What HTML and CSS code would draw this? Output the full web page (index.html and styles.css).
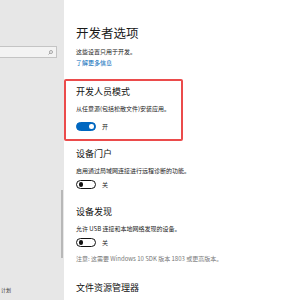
FILE: index.html
```html
<!DOCTYPE html>
<html lang="zh-CN">
<head>
  <meta charset="UTF-8">
  <title>开发者选项</title>
  <link rel="stylesheet" href="styles.css">
</head>
<body>
  <div class="window">
    <aside class="sidebar">
      <div class="search">
        <svg class="search-icon" width="5" height="5" viewBox="0 0 10 10">
          <circle cx="6" cy="4" r="3" fill="none" stroke="#777" stroke-width="1.2"/>
          <line x1="4" y1="6" x2="1" y2="9" stroke="#777" stroke-width="1.2"/>
        </svg>
      </div>
      <div class="nav-item">计划</div>
      <div class="scroll-thumb"></div>
    </aside>

    <main class="content">
      <h1 class="page-title">开发者选项</h1>
      <p class="desc intro">这些设置只用于开发。</p>
      <a class="more" href="#">了解更多信息</a>

      <section class="group highlight">
        <h2 class="group-title">开发人员模式</h2>
        <p class="desc">从任意源(包括松散文件)安装应用。</p>
        <div class="toggle-row">
          <span class="toggle on"><span class="knob"></span></span>
          <span class="toggle-label">开</span>
        </div>
      </section>

      <section class="group portal">
        <h2 class="group-title">设备门户</h2>
        <p class="desc">启用通过局域网连接进行远程诊断的功能。</p>
        <div class="toggle-row">
          <span class="toggle"><span class="knob"></span></span>
          <span class="toggle-label">关</span>
        </div>
      </section>

      <section class="group discovery">
        <h2 class="group-title">设备发现</h2>
        <p class="desc">允许 USB 连接和本地网络发现的设备。</p>
        <div class="toggle-row">
          <span class="toggle"><span class="knob"></span></span>
          <span class="toggle-label">关</span>
        </div>
        <p class="desc note">注意: 这需要 Windows 10 SDK 版本 1803 或更高版本。</p>
      </section>

      <section class="group explorer">
        <h2 class="group-title">文件资源管理器</h2>
      </section>
    </main>
  </div>
</body>
</html>
```

FILE: styles.css
```css
* {
  margin: 0;
  padding: 0;
  box-sizing: border-box;
}

body {
  font-family: "Noto Sans CJK SC", "Noto Sans", sans-serif;
  background: #fff;
  color: #1a1a1a;
  width: 300px;
  height: 300px;
  overflow: hidden;
}

.window {
  display: flex;
  height: 300px;
}

/* 左侧导航 */
.sidebar {
  position: relative;
  width: 64px;
  flex-shrink: 0;
  background: #e7e7e7;
  overflow: hidden;
  display: flex;
  flex-direction: column;
}

.search {
  margin-top: 46px;
  width: 57px;
  height: 12px;
  background: #f3f3f3;
  border: 1px solid #c4c4c4;
  border-left: none;
  display: flex;
  align-items: center;
  justify-content: flex-end;
  padding-right: 3px;
}

.search-icon {
  display: block;
}

.nav-item {
  margin-top: auto;
  margin-bottom: 6px;
  padding-left: 1px;
  font-size: 5px;
  line-height: 8px;
  color: #333;
  white-space: nowrap;
}

.scroll-thumb {
  position: absolute;
  right: 1px;
  top: 190px;
  width: 2px;
  height: 68px;
  background: #b8b8b8;
}

/* 右侧内容 */
.content {
  flex: 1;
  padding-top: 24px;
}

.page-title {
  font-size: 12.5px;
  line-height: 17px;
  font-weight: 400;
  padding-left: 12px;
}

.desc {
  font-size: 6px;
  line-height: 8px;
  color: #222;
  white-space: nowrap;
}

.intro {
  margin-top: 7px;
  padding-left: 12px;
}

.more {
  display: block;
  margin-top: 3px;
  padding-left: 12px;
  font-size: 6px;
  line-height: 8px;
  color: #0067b8;
  text-decoration: none;
}

.group {
  padding-left: 12px;
}

.group-title {
  font-size: 9px;
  line-height: 12px;
  font-weight: 400;
  color: #111;
}

.group .desc {
  margin-top: 7px;
}

.highlight {
  margin-top: 12px;
  width: 119px;
  border: 2px solid #eb4b4b;
  border-radius: 2px;
  padding: 5px 0 8px 10px;
}

.highlight .toggle-row {
  margin-top: 9px;
}

.portal {
  margin-top: 7px;
}

.discovery {
  margin-top: 17px;
}

.explorer {
  margin-top: 19px;
}

.toggle-row {
  margin-top: 5px;
  display: flex;
  align-items: center;
  gap: 6px;
}

.toggle {
  width: 20px;
  height: 9px;
  border-radius: 5px;
  border: 1px solid #111;
  background: #fff;
  display: flex;
  align-items: center;
  padding: 0 1.5px;
}

.toggle .knob {
  width: 4.5px;
  height: 4.5px;
  border-radius: 50%;
  background: #111;
}

.toggle.on {
  background: #0067c0;
  border-color: #0067c0;
  justify-content: flex-end;
}

.toggle.on .knob {
  background: #fff;
}

.toggle-label {
  font-size: 6px;
  line-height: 8px;
  color: #222;
}

.note {
  color: #777;
}

.discovery .note {
  margin-top: 8px;
}
```
